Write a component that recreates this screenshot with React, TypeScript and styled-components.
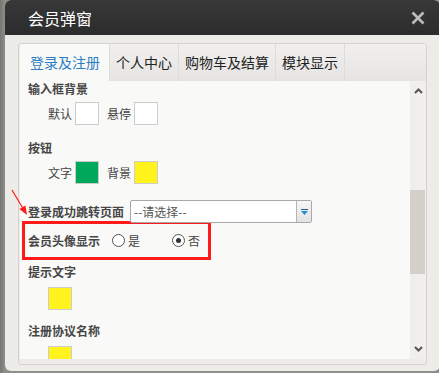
import React from 'react';
import styled, { createGlobalStyle } from 'styled-components';

const GlobalStyle = createGlobalStyle`
  html, body {
    margin: 0;
    padding: 0;
  }
  body {
    width: 439px;
    height: 373px;
    overflow: hidden;
    background: #8a8a86;
    font-family: "Noto Sans CJK SC", "Noto Sans", sans-serif;
  }
`;

const Page = styled.div`
  position: relative;
  padding-left: 5px;
  height: 373px;
  background: linear-gradient(90deg, #767672 0px, #8e8e8a 5px);
`;

const Dialog = styled.div`
  width: 435px;
  height: 371px;
  border-radius: 6px;
  overflow: hidden;
  display: flex;
  flex-direction: column;
  background: #edece9;
`;

const TitleBar = styled.div`
  height: 35px;
  flex: none;
  display: flex;
  align-items: center;
  justify-content: space-between;
  padding: 0 15px 0 23px;
  background: linear-gradient(#383838, #2c2c2c);
  color: #ffffff;
  font-size: 16px;
`;

const Body = styled.div`
  flex: 1;
  min-height: 0;
  padding: 8px 13px 6px;
  display: flex;
`;

const Frame = styled.div`
  flex: 1;
  display: flex;
  flex-direction: column;
  border: 1px solid #d3d2ce;
  border-radius: 3px;
  padding: 0 0 5px 1px;
  min-height: 0;
`;

const TabBar = styled.div`
  height: 37px;
  flex: none;
  display: flex;
  background: linear-gradient(#f1f0ee, #e5e4e2);
`;

const Tab = styled.div<{ $active?: boolean }>`
  padding: ${(p) => (p.$active ? '0 9px 0 10px' : '0 6px')};
  border-right: 1px solid #dddcd9;
  line-height: 37px;
  font-size: 14px;
  color: ${(p) => (p.$active ? '#2b7cc4' : '#222222')};
  background: ${(p) => (p.$active ? '#f9f9f7' : 'transparent')};
`;

const Content = styled.div`
  flex: 1;
  min-height: 0;
  display: flex;
`;

const Scroll = styled.div`
  flex: 1;
  overflow: hidden;
  background: #f9f9f7;
  padding-left: 8px;
  font-size: 12px;
  color: #444444;
`;

const ScrollTrack = styled.div`
  width: 16px;
  flex: none;
  display: flex;
  flex-direction: column;
  background: #f0efed;
`;

const ArrowBox = styled.div`
  height: 20px;
  display: flex;
  align-items: center;
  justify-content: center;
`;

const Thumb = styled.div<{ $top: number; $size: number }>`
  margin-top: ${(p) => p.$top}px;
  height: ${(p) => p.$size}px;
  width: 15px;
  background: #d3d0c9;
`;

const Spacer = styled.div`
  flex: 1;
`;

const SectionLabel = styled.div<{ $gap: number }>`
  margin-top: ${(p) => p.$gap}px;
  height: 16px;
  line-height: 16px;
  font-weight: bold;
  color: #464646;
`;

const SwatchRow = styled.div<{ $gap: number }>`
  margin-top: ${(p) => p.$gap}px;
  padding-left: 20px;
  height: 23px;
  display: flex;
  align-items: center;
`;

const SwatchLabel = styled.span`
  margin-right: 3px;
`;

const Swatch = styled.div<{ $color: string }>`
  width: 24px;
  height: 23px;
  box-sizing: border-box;
  border: 1px solid #cccccc;
  background: ${(p) => p.$color};
  margin-right: 8px;
  flex: none;
`;

const SelectRow = styled.div`
  margin-top: 16px;
  height: 23px;
  display: flex;
  align-items: center;
`;

const FieldLabel = styled.span`
  font-weight: bold;
  color: #464646;
`;

const Select = styled.div`
  margin-left: 6px;
  width: 182px;
  height: 23px;
  box-sizing: border-box;
  border: 1px solid #a9a9a9;
  border-radius: 2px;
  background: #ffffff;
  display: flex;
  align-items: stretch;
`;

const SelectText = styled.span`
  flex: 1;
  padding-left: 3px;
  line-height: 21px;
  color: #555555;
`;

const SelectButton = styled.div`
  width: 14px;
  border-left: 1px solid #b5b5b5;
  background: linear-gradient(#f6f6f6, #e2e2e2);
  display: flex;
  align-items: center;
  justify-content: center;
`;

const HighlightRow = styled.div`
  margin-top: -2px;
  margin-left: -6px;
  width: 189px;
  height: 39px;
  box-sizing: border-box;
  border: 3px solid #ff1a1a;
  padding-left: 3px;
  display: flex;
  align-items: center;
`;

const RadioOption = styled.label<{ $gap: number }>`
  margin-left: ${(p) => p.$gap}px;
  display: flex;
  align-items: center;
  gap: 3px;
  color: #444444;
`;

const RadioDot = styled.span<{ $checked?: boolean }>`
  width: 13px;
  height: 13px;
  box-sizing: border-box;
  border-radius: 50%;
  border: 1px solid #555555;
  background: #ffffff;
  display: flex;
  align-items: center;
  justify-content: center;
  &::after {
    content: '';
    width: 5px;
    height: 5px;
    border-radius: 50%;
    background: ${(p) => (p.$checked ? '#333333' : 'transparent')};
  }
`;

const Annotation = styled.svg`
  position: absolute;
  left: 0;
  top: 180px;
`;

const Chevron = ({ up }: { up?: boolean }) => (
  <svg width="9" height="6" viewBox="0 0 9 6">
    <path
      d={up ? 'M1 5 L4.5 1.5 L8 5' : 'M1 1 L4.5 4.5 L8 1'}
      fill="none"
      stroke="#555555"
      strokeWidth="2"
    />
  </svg>
);

const tabs = ['登录及注册', '个人中心', '购物车及结算', '模块显示'];

const App = () => (
  <>
    <GlobalStyle />
    <Page>
      <Dialog>
        <TitleBar>
          <span>会员弹窗</span>
          <svg width="14" height="14" viewBox="0 0 14 14">
            <path d="M1.5 1.5 L12.5 12.5 M12.5 1.5 L1.5 12.5" stroke="#bdbdbd" strokeWidth="2.6" />
          </svg>
        </TitleBar>
        <Body>
          <Frame>
            <TabBar>
              {tabs.map((t, i) => (
                <Tab key={t} $active={i === 0}>
                  {t}
                </Tab>
              ))}
            </TabBar>
            <Content>
              <Scroll>
                <SectionLabel $gap={0}>输入框背景</SectionLabel>
                <SwatchRow $gap={5}>
                  <SwatchLabel>默认</SwatchLabel>
                  <Swatch $color="#ffffff" />
                  <SwatchLabel>悬停</SwatchLabel>
                  <Swatch $color="#ffffff" />
                </SwatchRow>
                <SectionLabel $gap={15}>按钮</SectionLabel>
                <SwatchRow $gap={5}>
                  <SwatchLabel>文字</SwatchLabel>
                  <Swatch $color="#00a85b" />
                  <SwatchLabel>背景</SwatchLabel>
                  <Swatch $color="#fff21d" />
                </SwatchRow>
                <SelectRow>
                  <FieldLabel>登录成功跳转页面</FieldLabel>
                  <Select>
                    <SelectText>--请选择--</SelectText>
                    <SelectButton>
                      <svg width="7" height="6" viewBox="0 0 7 6">
                        <rect x="0" y="0" width="7" height="1" fill="#1d5e8c" />
                        <path d="M0 2 L7 2 L3.5 6 Z" fill="#2a8acb" />
                      </svg>
                    </SelectButton>
                  </Select>
                </SelectRow>
                <HighlightRow>
                  <FieldLabel>会员头像显示</FieldLabel>
                  <RadioOption $gap={12}>
                    <RadioDot />是
                  </RadioOption>
                  <RadioOption $gap={32}>
                    <RadioDot $checked />否
                  </RadioOption>
                </HighlightRow>
                <SectionLabel $gap={4}>提示文字</SectionLabel>
                <SwatchRow $gap={7}>
                  <Swatch $color="#fff21d" />
                </SwatchRow>
                <SectionLabel $gap={13}>注册协议名称</SectionLabel>
                <SwatchRow $gap={7}>
                  <Swatch $color="#fff21d" />
                </SwatchRow>
              </Scroll>
              <ScrollTrack>
                <ArrowBox>
                  <Chevron up />
                </ArrowBox>
                <Thumb $top={89} $size={84} />
                <Spacer />
                <ArrowBox>
                  <Chevron />
                </ArrowBox>
              </ScrollTrack>
            </Content>
          </Frame>
        </Body>
      </Dialog>
      <Annotation width="40" height="40" viewBox="0 0 40 40">
        <path d="M12 10 L24.5 31" stroke="#ff1a1a" strokeWidth="1.2" />
        <path d="M27 35 L25.4 25.5 L19.4 29.1 Z" fill="#ff1a1a" />
      </Annotation>
    </Page>
  </>
);

export default App;
